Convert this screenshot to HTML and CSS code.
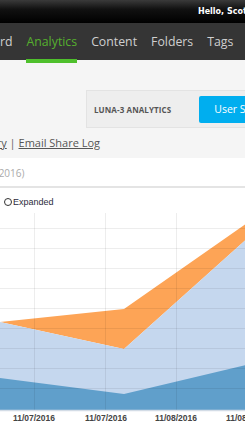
FILE: index.html
```html
<!DOCTYPE html>
<html lang="en">
<head>
    <meta charset="UTF-8">
    <meta name="viewport" content="width=device-width, initial-scale=1.0">
    <title>Analytics</title>
    <link rel="stylesheet" href="styles.css">
</head>
<body>
    <div class="topbar">
        <span class="hello">Hello, Scott</span>
    </div>
    <nav class="mainnav">
        <a href="#">Dashboard</a>
        <a href="#" class="active">Analytics</a>
        <a href="#">Content</a>
        <a href="#">Folders</a>
        <a href="#">Tags</a>
    </nav>

    <div class="page">
        <div class="crumbs">
            <span class="crumb-title">LUNA-3 ANALYTICS</span>
            <svg class="chev" width="11" height="17" viewBox="0 0 11 17">
                <path d="M1 1 L9.5 8.5 L1 16" fill="none" stroke="#cdcdcd" stroke-width="1.3"/>
            </svg>
            <a href="#" class="btn">User Stats</a>
        </div>
        <div class="links">
            <a href="#">Activity Summary</a> | <a href="#">Email Share Log</a>
        </div>
    </div>

    <div class="panel">
        <div class="panel-head">(11/07/2016 - 11/08/2016)</div>
        <div class="legend">
            <span class="radio"></span>
            <span>Expanded</span>
        </div>
        <svg class="chart" width="245" height="222" viewBox="0 0 245 222">
            <polygon points="0,109 124,96 250,8 250,23 124,136" fill="#fda456"/>
            <polygon points="0,109 124,136 250,23 250,197 0,197" fill="#c5d7ee"/>
            <polygon points="0,165 124,181 250,151 250,197 0,197" fill="#609fcb"/>
            <g stroke="rgba(0,0,0,0.07)" stroke-width="1">
                <line x1="34.5" y1="0" x2="34.5" y2="197"/>
                <line x1="105.5" y1="0" x2="105.5" y2="197"/>
                <line x1="176.5" y1="0" x2="176.5" y2="197"/>
                <line x1="0" y1="15.5" x2="245" y2="15.5"/>
                <line x1="0" y1="35.5" x2="245" y2="35.5"/>
                <line x1="0" y1="55.5" x2="245" y2="55.5"/>
                <line x1="0" y1="75.5" x2="245" y2="75.5"/>
                <line x1="0" y1="95.5" x2="245" y2="95.5"/>
                <line x1="0" y1="115.5" x2="245" y2="115.5"/>
                <line x1="0" y1="135.5" x2="245" y2="135.5"/>
                <line x1="0" y1="155.5" x2="245" y2="155.5"/>
                <line x1="0" y1="175.5" x2="245" y2="175.5"/>
            </g>
            <line x1="0" y1="197.5" x2="245" y2="197.5" stroke="#d3dce6" stroke-width="1.5"/>
            <g class="axis">
                <text x="34" y="208">11/07/2016</text>
                <text x="106" y="208">11/07/2016</text>
                <text x="176" y="208">11/08/2016</text>
                <text x="247" y="208">11/08/2016</text>
            </g>
        </svg>
    </div>
</body>
</html>
```
FILE: styles.css
```css
body{
    margin: 0;
    width: 245px;
    overflow: hidden;
    font-family: "Open Sans", "Liberation Sans", sans-serif;
    background: #fff;
}
a{
    color: inherit;
}

.topbar{
    height: 23px;
    background: linear-gradient(#3a3a3a, #111 40%, #000);
    display: flex;
    align-items: center;
    white-space: nowrap;
}
.hello{
    margin-left: 198px;
    color: #fff;
    font-family: "DejaVu Sans", sans-serif;
    font-weight: bold;
    font-size: 8px;
}

.mainnav{
    position: relative;
    height: 37px;
    background: #353535;
    display: flex;
    align-items: center;
    gap: 14px;
    margin-left: -51px;
    white-space: nowrap;
}
.mainnav a{
    position: relative;
    color: #cfcfcf;
    text-decoration: none;
    font-size: 12.3px;
    line-height: 37px;
}
.mainnav a.active{
    color: #55b02e;
}
.mainnav a.active::after{
    content: "";
    position: absolute;
    left: 0;
    right: 0;
    bottom: -3px;
    height: 4px;
    background: #4fc02c;
}

.page{
    background: #f5f5f5;
    padding: 30px 0 7px;
}
.crumbs{
    margin-left: 86px;
    height: 36px;
    background: #eeeeee;
    border: 1px solid #e3e3e3;
    border-right: none;
    display: flex;
    align-items: center;
    white-space: nowrap;
    overflow: hidden;
}
.crumb-title{
    margin-left: 7px;
    font-size: 8px;
    font-weight: bold;
    letter-spacing: 0.1px;
    color: #555;
}
.chev{
    margin-left: 5px;
}
.btn{
    margin-left: 23px;
    height: 27px;
    line-height: 27px;
    padding: 0 15px;
    background: #00aeef;
    color: #fff;
    text-decoration: none;
    font-size: 10.5px;
    border-radius: 2px;
}
.links{
    margin-top: 7px;
    margin-left: -82px;
    font-size: 11px;
    line-height: 16px;
    color: #666;
    white-space: nowrap;
}
.links a{
    color: #555;
}

.panel{
    background: #fff;
}
.panel-head{
    margin-left: -96px;
    padding: 8px 0 6px;
    line-height: 14px;
    font-size: 10px;
    color: #aaa;
    white-space: nowrap;
    border-bottom: 2px solid #e4e4e4;
}
.legend{
    display: flex;
    align-items: center;
    gap: 1px;
    padding: 8px 0 0 4px;
    height: 12px;
    margin-bottom: 5px;
    font-family: "Liberation Sans", sans-serif;
    font-size: 9px;
    color: #2c2c3c;
}
.radio{
    width: 6px;
    height: 6px;
    border: 1.5px solid #333;
    border-radius: 50%;
}
.chart{
    display: block;
}
.axis text{
    font-family: "Liberation Sans", sans-serif;
    font-size: 8.5px;
    font-weight: bold;
    fill: #444;
    text-anchor: middle;
}
```
